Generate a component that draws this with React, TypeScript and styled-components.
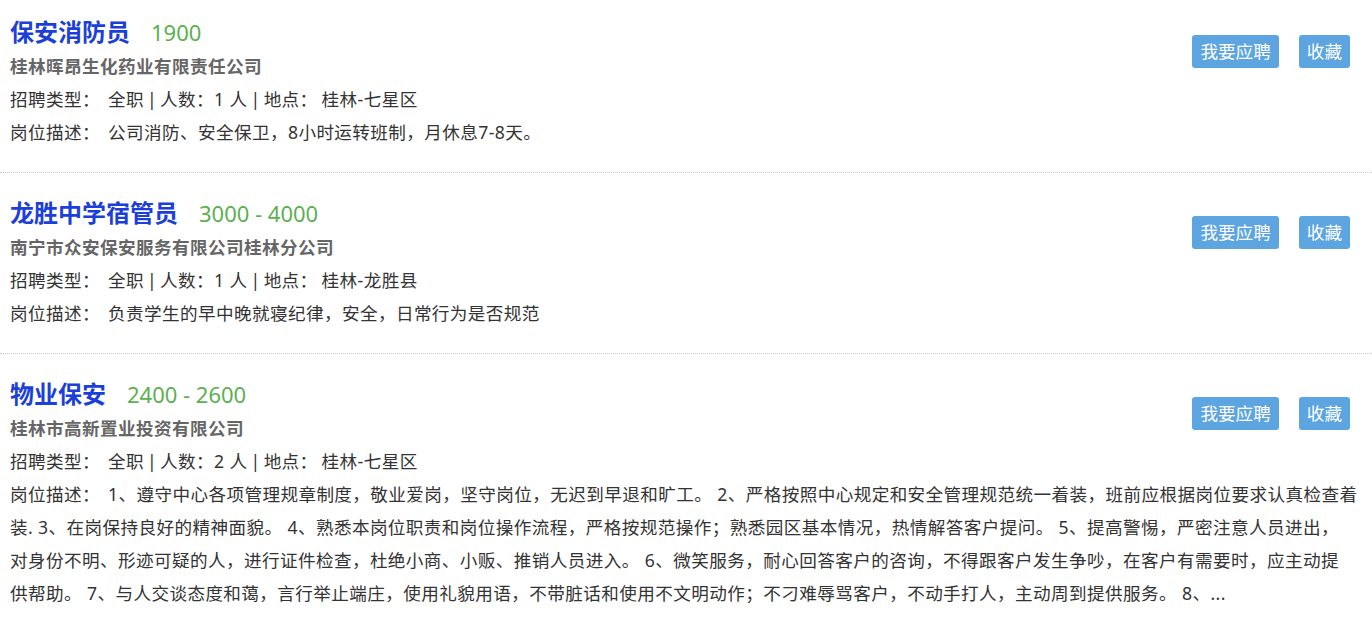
import React from 'react'
import styled, { createGlobalStyle } from 'styled-components'

const GlobalStyle = createGlobalStyle`
  body {
    margin: 0;
    background: #fff;
    font-family: "Noto Sans", "Noto Sans CJK SC", sans-serif;
    font-size: 17.6px;
    color: #333;
  }
`

interface Job {
  title: string
  salary: string
  company: string
  count: number
  place: string
  desc: string
}

const jobs: Job[] = [
  {
    title: '保安消防员',
    salary: '1900',
    company: '桂林晖昂生化药业有限责任公司',
    count: 1,
    place: '桂林-七星区',
    desc: '公司消防、安全保卫，8小时运转班制，月休息7-8天。',
  },
  {
    title: '龙胜中学宿管员',
    salary: '3000 - 4000',
    company: '南宁市众安保安服务有限公司桂林分公司',
    count: 1,
    place: '桂林-龙胜县',
    desc: '负责学生的早中晚就寝纪律，安全，日常行为是否规范',
  },
  {
    title: '物业保安',
    salary: '2400 - 2600',
    company: '桂林市高新置业投资有限公司',
    count: 2,
    place: '桂林-七星区',
    // line breaks kept where the original page wrapped
    desc:
      '1、遵守中心各项管理规章制度，敬业爱岗，坚守岗位，无迟到早退和旷工。 2、严格按照中心规定和安全管理规范统一着装，班前应根据岗位要求认真检查着\n装. 3、在岗保持良好的精神面貌。 4、熟悉本岗位职责和岗位操作流程，严格按规范操作；熟悉园区基本情况，热情解答客户提问。 5、提高警惕，严密注意人员进出，\n对身份不明、形迹可疑的人，进行证件检查，杜绝小商、小贩、推销人员进入。 6、微笑服务，耐心回答客户的咨询，不得跟客户发生争吵，在客户有需要时，应主动提\n供帮助。 7、与人交谈态度和蔼，言行举止端庄，使用礼貌用语，不带脏话和使用不文明动作；不刁难辱骂客户，不动手打人，主动周到提供服务。 8、...',
  },
]

export default function App() {
  return (
    <>
      <GlobalStyle />
      <JobList>
        {jobs.map((job) => (
          <JobCard key={job.title}>
            <Actions>
              <ActionButton>我要应聘</ActionButton>
              <ActionButton>收藏</ActionButton>
            </Actions>
            <TitleRow>
              <JobTitle>{job.title}</JobTitle>
              <Salary>{job.salary}</Salary>
            </TitleRow>
            <Company>{job.company}</Company>
            <InfoLine>
              <Label>招聘类型：</Label>
              全职<Sep>|</Sep>人数：{job.count} 人<Sep>|</Sep>地点：<Value>{job.place}</Value>
            </InfoLine>
            <DescLine>
              <Label>岗位描述：</Label>
              {job.desc}
            </DescLine>
          </JobCard>
        ))}
      </JobList>
    </>
  )
}

const JobList = styled.div`
  display: flex;
  flex-direction: column;
  gap: 8px;
`

const JobCard = styled.div`
  padding: 14px 10px 23px 10px;
  border-bottom: 1px dotted #c8c8c8;
`

const Actions = styled.div`
  float: right;
  display: flex;
  gap: 20px;
  margin: 21px 12px 0 20px;
`

const ActionButton = styled.button`
  height: 33px;
  padding: 0 8px;
  border: none;
  border-radius: 3px;
  background: #5ca5e0;
  color: #fff;
  font-family: inherit;
  font-size: 17.6px;
  line-height: 33px;
  cursor: pointer;
`

const TitleRow = styled.div`
  display: flex;
  align-items: baseline;
  gap: 21px;
  line-height: 36px;
`

const JobTitle = styled.span`
  font-size: 24px;
  font-weight: bold;
  color: #1b3fd8;
`

const Salary = styled.span`
  font-size: 22px;
  color: #5cb050;
`

const Company = styled.div`
  font-weight: bold;
  color: #666;
  line-height: 33px;
  letter-spacing: 0.4px;
`

const InfoLine = styled.div`
  line-height: 33px;
  color: #333;
  letter-spacing: 0.4px;
`

const DescLine = styled(InfoLine)`
  white-space: pre-line;
`

const Label = styled.span`
  margin-right: 8px;
`

const Sep = styled.span`
  margin: 0 3px;
`

const Value = styled.span`
  margin-left: 4px;
`
